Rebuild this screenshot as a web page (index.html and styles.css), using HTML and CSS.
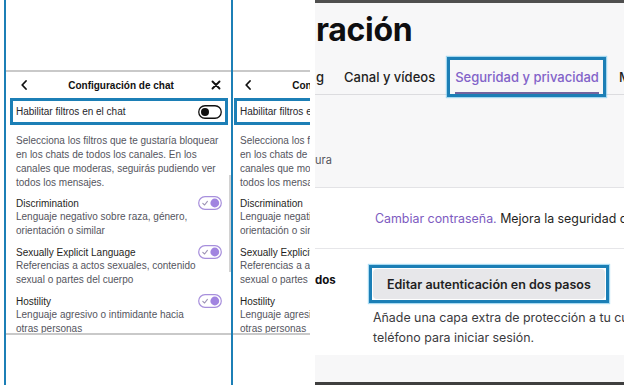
FILE: index.html
```html
<!DOCTYPE html>
<html lang="es">
<head>
<meta charset="utf-8">
<title>Configuración de chat</title>
<link rel="stylesheet" href="styles.css">
</head>
<body>
<div class="collage">
  <section class="phone">
    <div class="screen">
      <div class="screen-top"></div>
      <header class="sheet-head">
        <svg class="icon-back" width="6" height="10" viewBox="0 0 6 10"><path d="M5 1 L1.2 5 L5 9" fill="none" stroke="#111" stroke-width="1.8" stroke-linecap="round" stroke-linejoin="round"/></svg>
        <h2 class="sheet-title">Configuración de chat</h2>
        <svg class="icon-close" width="10" height="10" viewBox="0 0 10 10"><path d="M1.5 1.5 L8.5 8.5 M8.5 1.5 L1.5 8.5" fill="none" stroke="#111" stroke-width="1.9" stroke-linecap="round"/></svg>
      </header>
      <div class="enable-row">
        <span>Habilitar filtros en el chat</span>
        <svg class="toggle" width="24" height="14" viewBox="0 0 24 14"><rect x="0.75" y="0.75" width="22.5" height="12.5" rx="6.25" fill="#fff" stroke="#111" stroke-width="1.3"/><circle cx="7" cy="7" r="4" fill="#111"/></svg>
      </div>
      <div class="filters">
        <p class="intro">Selecciona los filtros que te gustaría bloquear en los chats de todos los canales. En los canales que moderas, seguirás pudiendo ver todos los mensajes.</p>
        <div class="filter">
          <div class="filter-head"><span class="filter-name">Discrimination</span>
            <svg class="toggle" width="24" height="14" viewBox="0 0 24 14"><rect x="0.7" y="0.7" width="22.6" height="12.6" rx="6.3" fill="#fff" stroke="#a78fdc" stroke-width="1.2"/><path d="M4.8 7.3 L6.6 9 L9.4 5.4" fill="none" stroke="#9d93b5" stroke-width="1.1" stroke-linecap="round" stroke-linejoin="round"/><circle cx="16.8" cy="7" r="4.4" fill="#a184e0"/></svg>
          </div>
          <p class="filter-desc">Lenguaje negativo sobre raza, género, orientación o similar</p>
        </div>
        <div class="filter">
          <div class="filter-head"><span class="filter-name">Sexually Explicit Language</span>
            <svg class="toggle" width="24" height="14" viewBox="0 0 24 14"><rect x="0.7" y="0.7" width="22.6" height="12.6" rx="6.3" fill="#fff" stroke="#a78fdc" stroke-width="1.2"/><path d="M4.8 7.3 L6.6 9 L9.4 5.4" fill="none" stroke="#9d93b5" stroke-width="1.1" stroke-linecap="round" stroke-linejoin="round"/><circle cx="16.8" cy="7" r="4.4" fill="#a184e0"/></svg>
          </div>
          <p class="filter-desc">Referencias a actos sexuales, contenido sexual o partes del cuerpo</p>
        </div>
        <div class="filter">
          <div class="filter-head"><span class="filter-name">Hostility</span>
            <svg class="toggle" width="24" height="14" viewBox="0 0 24 14"><rect x="0.7" y="0.7" width="22.6" height="12.6" rx="6.3" fill="#fff" stroke="#a78fdc" stroke-width="1.2"/><path d="M4.8 7.3 L6.6 9 L9.4 5.4" fill="none" stroke="#9d93b5" stroke-width="1.1" stroke-linecap="round" stroke-linejoin="round"/><circle cx="16.8" cy="7" r="4.4" fill="#a184e0"/></svg>
          </div>
          <p class="filter-desc">Lenguaje agresivo o intimidante hacia otras personas</p>
        </div>
        <span class="scrollbar"></span>
      </div>
    </div>
  </section>

  <section class="phone-peek">
    <div class="peek-clip">
      <div class="screen screen--peek">
        <div class="screen-top"></div>
        <header class="sheet-head">
          <svg class="icon-back" width="6" height="10" viewBox="0 0 6 10"><path d="M5 1 L1.2 5 L5 9" fill="none" stroke="#111" stroke-width="1.8" stroke-linecap="round" stroke-linejoin="round"/></svg>
          <h2 class="sheet-title">Configuración de chat</h2>
          <svg class="icon-close" width="10" height="10" viewBox="0 0 10 10"><path d="M1.5 1.5 L8.5 8.5 M8.5 1.5 L1.5 8.5" fill="none" stroke="#111" stroke-width="1.9" stroke-linecap="round"/></svg>
        </header>
        <div class="enable-row">
          <span>Habilitar filtros en el chat</span>
        </div>
        <div class="filters">
          <p class="intro">Selecciona los filtros que te gustaría bloquear en los chats de todos los canales. En los canales que moderas, seguirás pudiendo ver todos los mensajes.</p>
          <div class="filter">
            <div class="filter-head"><span class="filter-name">Discrimination</span></div>
            <p class="filter-desc">Lenguaje negativo sobre raza, género, orientación o similar</p>
          </div>
          <div class="filter">
            <div class="filter-head"><span class="filter-name">Sexually Explicit Language</span></div>
            <p class="filter-desc">Referencias a actos sexuales, contenido sexual o partes del cuerpo</p>
          </div>
          <div class="filter">
            <div class="filter-head"><span class="filter-name">Hostility</span></div>
            <p class="filter-desc">Lenguaje agresivo o intimidante hacia otras personas</p>
          </div>
        </div>
      </div>
    </div>
  </section>

  <section class="settings">
    <h1 class="settings-title">ración</h1>
    <nav class="tabs">
      <span class="tab">g</span>
      <span class="tab">Canal y vídeos</span>
      <span class="tab tab--active">Seguridad y privacidad</span>
      <span class="tab">M</span>
    </nav>
    <p class="settings-note">ura</p>
    <div class="card">
      <div class="card-row card-row--center">
        <div class="row-label"></div>
        <p class="row-text"><span class="link">Cambiar contraseña.</span> Mejora la seguridad de tu cuenta</p>
      </div>
      <div class="card-row">
        <div class="row-label row-label--bold">dos</div>
        <div class="row-body">
          <div class="btn-frame"><button class="btn">Editar autenticación en dos pasos</button></div>
          <p class="row-help">Añade una capa extra de protección a tu cuenta<br>teléfono para iniciar sesión.</p>
        </div>
      </div>
    </div>
  </section>
</div>
</body>
</html>
```

FILE: styles.css
```css
* { box-sizing: border-box; }

body {
  margin: 0;
  width: 624px;
  height: 385px;
  overflow: hidden;
  background: #fff;
}

.collage {
  display: flex;
  height: 385px;
}

/* ---------- phone screens ---------- */
.phone {
  flex: none;
  width: 233px;
  padding-left: 4px;
}

.screen {
  height: 385px;
  border-left: 2px solid #1c7fb6;
  border-right: 2px solid #1c7fb6;
  font-family: "Liberation Sans", Arial, sans-serif;
  background: #fff;
}

.screen-top {
  height: 72px;
  border-bottom: 2px solid #c9c9c9;
}

.sheet-head {
  height: 26px;
  display: grid;
  grid-template-columns: 1fr auto 1fr;
  align-items: center;
  padding: 0 10px 0 15px;
}

.icon-back { justify-self: start; }
.icon-close { justify-self: end; }

.sheet-title {
  margin: 0;
  font-size: 10px;
  font-weight: 700;
  color: #111;
  white-space: nowrap;
}

.enable-row {
  height: 27px;
  margin: 0 3px 0 4px;
  border: 3px solid #1c7fb6;
  display: flex;
  align-items: center;
  justify-content: space-between;
  padding: 0 3px 0 3px;
  font-size: 10px;
  color: #26262c;
  white-space: nowrap;
}

.toggle { display: block; flex: none; }

.filters {
  position: relative;
  height: 210px;
  overflow: hidden;
  padding: 9px 9px 0 10px;
  border-bottom: 2px solid #c9c9c9;
}

.intro {
  margin: 0 0 6px;
  max-width: 208px;
  font-size: 10px;
  line-height: 14px;
  color: #55555e;
}

.filter { margin-bottom: 7px; }

.filter-head {
  height: 14px;
  display: flex;
  align-items: center;
  justify-content: space-between;
}

.filter-name {
  font-size: 10px;
  color: #1f1f23;
  white-space: nowrap;
}

.filter-desc {
  margin: 0;
  max-width: 185px;
  font-size: 10px;
  line-height: 14px;
  color: #55555e;
}

.scrollbar {
  position: absolute;
  right: 0;
  top: 50px;
  width: 2px;
  height: 97px;
  background: #d2d2d2;
}

/* clipped second phone */
.phone-peek {
  flex: none;
  width: 82px;
  padding-right: 5px;
}

.peek-clip {
  height: 385px;
  overflow: hidden;
}

.screen--peek {
  width: 225px;
  border: none;
  margin-left: -3px;
}

/* ---------- settings page ---------- */
.settings {
  flex: 1;
  min-width: 0;
  overflow: hidden;
  background: #f7f7f8;
  border-top: 3px solid #4f4f4f;
  border-bottom: 3px solid #3f3f3f;
  font-family: Inter, "Liberation Sans", sans-serif;
  color: #1f1f23;
}

.settings-title {
  margin: 9px 0 0 1px;
  font-size: 32px;
  line-height: 36px;
  font-weight: 700;
  letter-spacing: -0.3px;
  color: #0e0e10;
  white-space: nowrap;
}

.tabs {
  display: flex;
  gap: 20px;
  margin-top: 21px;
  padding-left: 1px;
  border-bottom: 1px solid #dcdcdf;
  white-space: nowrap;
}

.tab {
  flex: none;
  font-size: 13px;
  line-height: 16px;
  font-weight: 500;
  padding-bottom: 7px;
  border-bottom: 2px solid transparent;
  color: #1f1f23;
}

.tab--active {
  position: relative;
  color: #8263c9;
  border-bottom-color: #73659f;
}

.tab--active::after {
  content: "";
  position: absolute;
  left: -8px;
  right: -7px;
  top: -12px;
  bottom: -5px;
  border: 3px solid #1c7fb6;
  box-shadow: 0 0 1px 1px rgba(110, 195, 235, 0.6);
}

.settings-note {
  margin: 57px 0 0;
  font-size: 11px;
  line-height: 16px;
  color: #55555e;
}

.card {
  margin-top: 19px;
  background: #fff;
  border-top: 1px solid #e3e3e6;
}

.card-row {
  display: flex;
  padding: 16px 0 7px;
}

.card-row--center {
  height: 61px;
  padding: 0;
  align-items: center;
  border-bottom: 1px solid #e6e6e9;
}

.row-label {
  flex: none;
  width: 54px;
  font-size: 11.5px;
}

.row-label--bold {
  margin-top: 7px;
  font-weight: 700;
  line-height: 16px;
  color: #0e0e10;
}

.row-text {
  margin: 0 0 0 6px;
  font-size: 12.4px;
  white-space: nowrap;
  color: #1f1f23;
}

.link { color: #7d5bbf; }

.row-body { min-width: 0; }

.btn-frame {
  display: inline-block;
  border: 3px solid #1c7fb6;
  padding: 1px;
  box-shadow: 0 0 1px 1px rgba(110, 195, 235, 0.6);
}

.btn {
  display: block;
  height: 30px;
  padding: 0 14px;
  border: none;
  border-radius: 4px;
  background: #e7e7ea;
  font-family: Inter, "Liberation Sans", sans-serif;
  font-size: 12.5px;
  font-weight: 600;
  color: #1f1f23;
  white-space: nowrap;
}

.row-help {
  margin: 5px 0 0 4px;
  font-size: 12.4px;
  line-height: 20px;
  color: #3a3a3d;
  white-space: nowrap;
}
```
